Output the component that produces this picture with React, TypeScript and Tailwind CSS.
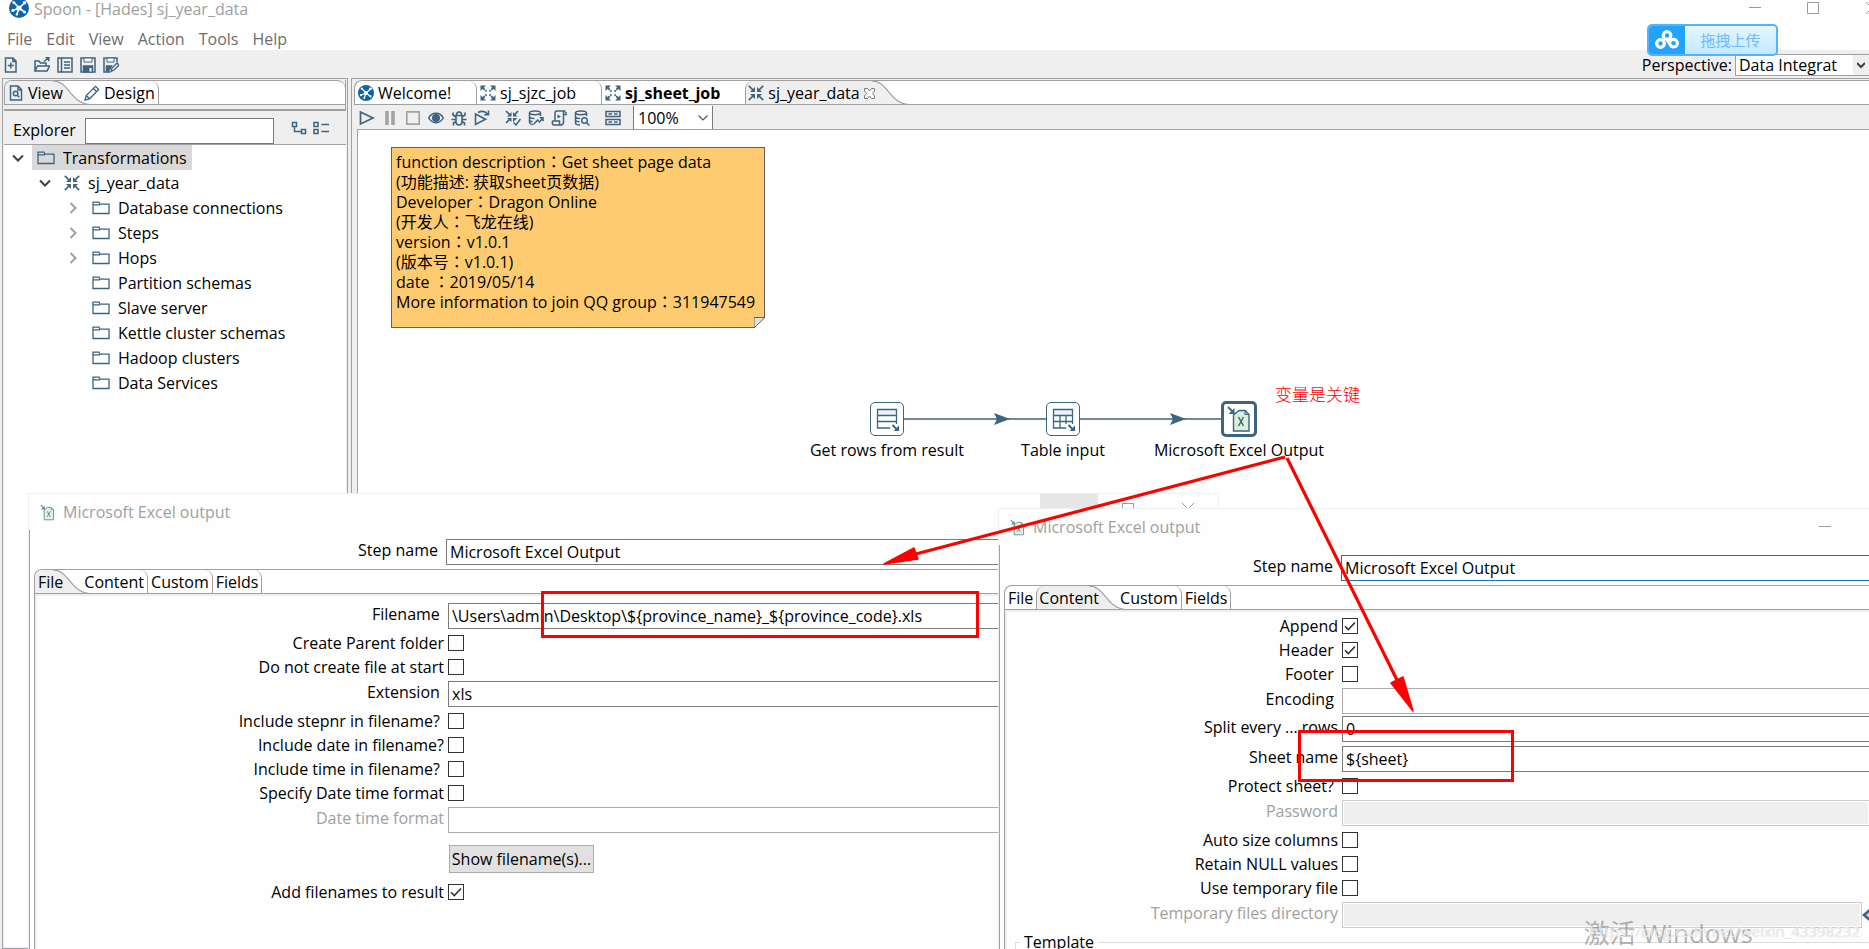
import React, { useId } from "react";

const INK = "#3d6480";

type IconProps = { className?: string };

function Icon({ children, className = "size-4" }: { children: React.ReactNode; className?: string }) {
  return (
    <svg viewBox="0 0 16 16" className={"shrink-0 " + className} fill="none" stroke={INK} strokeWidth="1.5" aria-hidden="true">
      {children}
    </svg>
  );
}

function SpoonLogo({ className = "size-4" }: IconProps) {
  return (
    <svg viewBox="0 0 20 20" className={"shrink-0 " + className} aria-hidden="true">
      <circle cx="10" cy="10" r="10" fill="#0f63ab" />
      <g stroke="#fff" strokeWidth="1.6" strokeLinecap="round">
        <path d="M10 10L5 4.5M10 10l5.5-5M10 10l-6 2.5M10 10l-2 6M10 10l5.5 4" />
      </g>
      <g fill="#fff">
        <circle cx="10" cy="10" r="2.6" />
        <circle cx="4.8" cy="4.6" r="1.4" />
        <circle cx="15.6" cy="4.8" r="1.8" />
        <circle cx="3.8" cy="12.6" r="1.5" />
        <circle cx="7.8" cy="16.4" r="1.2" />
        <circle cx="15.6" cy="14.2" r="1.4" />
      </g>
    </svg>
  );
}

const NewFile = () => (
  <Icon>
    <path d="M2.5 1h7.5l3 3v11H2.5zM10 1v3.5h3M7.8 5.5v6M4.8 8.5h6" />
  </Icon>
);
const OpenFile = () => (
  <Icon>
    <path d="M1 14V4h4l1.5 2H12v3M1 14l2.5-5H15.5l-2.5 5zM10 4.5L14.5 1M11.5 .8h3.3v3.4" />
  </Icon>
);
const Explore = () => (
  <Icon>
    <path d="M1 1h14v14H1zM4.5 1v14M7 5h6M7 8h6M7 11h6" />
  </Icon>
);
const Save = () => (
  <Icon>
    <path d="M1 1h14v14H1z" />
    <path d="M4 1h8v4H4z" fill="#fff" strokeWidth="1" />
    <path d="M3.5 15V9h9v6z" fill={INK} />
    <path d="M9.5 11h2v3.5h-2z" fill="#fff" stroke="none" />
  </Icon>
);
const SaveAs = () => (
  <Icon>
    <path d="M7 15H1V1h13v4" />
    <path d="M4 1h7v4H4z" fill="#fff" strokeWidth="1" />
    <path d="M3.5 14V9h5l-3 5z" fill={INK} />
    <path d="M8 14.5l1-3.5 5-5 2 2-5 5z" fill="#efefef" strokeWidth="1.3" />
  </Icon>
);
const FileSearch = () => (
  <Icon>
    <path d="M2.5 1h7.5l3.5 3.5V15h-11zM10 1v4h3.5" />
    <circle cx="7.6" cy="8.5" r="2.3" />
    <path d="M9.2 10.2l2 2" />
  </Icon>
);
const Pencil = () => (
  <Icon>
    <path d="M1 15l1.2-4.5L11.5 1.3l3.2 3.2L5.5 13.8zM9.5 3.5l3.2 3.2M2.2 10.5l3.3 3.3" strokeWidth="1.3" />
  </Icon>
);
const ExpandTree = () => (
  <Icon>
    <path d="M1.5 2.500h4v4h-4zM10.500 9.500h4v4h-4zM3.500 7v4.500H10" />
  </Icon>
);
const CollapseTree = () => (
  <Icon>
    <path d="M1 2.500h4v4H1zM1 9.500h4v4H1zM8.500 4.500H16M8.500 11.500H16" />
  </Icon>
);
const Folder = () => (
  <Icon className="h-4 w-[18px]">
    <path d="M0 2.200h6l1 2h9v9.300H0zM0 4.800h7" strokeWidth="1.300" />
  </Icon>
);
const Transformation = () => (
  <Icon>
    <path d="M.8 .8L6 6M15.200 .8L10 6M.8 15.200L6 10M15.200 15.200L10 10" strokeWidth="1.700" />
    <path d="M7 2v5H2zM9 2v5h5zM7 14V9H2zM9 14V9h5z" fill={INK} stroke="none" />
  </Icon>
);
const Job = () => (
  <Icon>
    <path d="M2 2l4.500 4.500M14 2L9.500 6.500M2 14l4.500-4.500M14 14L9.500 9.500" strokeWidth="1.800" strokeDasharray="4 .8" />
    <path d="M.5 .5H6L.5 6zM15.500 .5V6L10 .5zM.5 15.500V10L6 15.500zM15.500 15.500H10l5.500-5.500z" fill={INK} stroke="none" />
  </Icon>
);
const Play = () => (
  <Icon>
    <path d="M1.500 2L14 8 1.500 14z" strokeWidth="1.700" />
  </Icon>
);
const Pause = () => (
  <Icon>
    <path d="M5 1v14M11 1v14" stroke="#a3a3a3" strokeWidth="3.600" />
  </Icon>
);
const Stop = () => (
  <Icon>
    <path d="M1.800 1.800h12.400v12.400H1.800z" stroke="#a3a3a3" strokeWidth="1.700" />
  </Icon>
);
const Eye = () => (
  <Icon>
    <path d="M.7 8C4 1.800 12 1.800 15.300 8 12 14.200 4 14.200 .7 8z" />
    <circle cx="8" cy="8" r="4" fill={INK} stroke="none" />
  </Icon>
);
const Bug = () => (
  <Icon>
    <path d="M5 5.500h6v6C11 14 9.500 15 8 15s-3-1-3-3.500zM5.500 5C5.500 1 10.500 1 10.500 5M5 7L2 5V2.500M11 7l3-2V2.500M5 9.500H.5M11 9.500h4.500M5 11.500L2.500 13v2.500M11 11.500l2.500 1.500v2.500" strokeWidth="1.600" />
  </Icon>
);
const Replay = () => (
  <Icon>
    <path d="M1.500 4l10 5.200-10 5.300zM4 2.500C8 .5 11 1 13.500 4M14.500 .5v4.300h-4.300" strokeWidth="1.600" />
  </Icon>
);
const Verify = () => (
  <Icon>
    <path d="M1 1l4.500 4.500M13 1L9 5.500M1 13l4.500-4.500" strokeWidth="1.700" />
    <path d="M6.500 2v4.500H2zM8 2v4.500h4.500zM6.500 12V8H2zM8 12V8h4.500z" fill={INK} stroke="none" />
    <path d="M8.500 12.500l2.500 2.500 4.500-6" />
  </Icon>
);
const Impact = () => (
  <Icon>
    <path d="M12.500 6V3M1.500 3v9.500c0 1 2 2 4 2M1.500 6.500c0 1 2 2 5 2M1.500 10c0 1 1 1.500 3 1.700" />
    <ellipse cx="7" cy="2.800" rx="5.500" ry="1.900" />
    <path d="M6 14l3.500-4 2 2L15 8M11.800 7.800H15v3.400" />
  </Icon>
);
const Sql = () => (
  <Icon>
    <path d="M4 11V3c0-2 1-2 2-2h8.500c-1.500 0-2 .8-2 2v9c0 2-1 3-2.500 3H2.500C1 15 1 11 2 11h6.500v2c0 1 .5 2 1.500 2M12.500 4.500H15V2" />
    <path d="M6.500 4.500l3.500 2-3.500 2z" fill={INK} stroke="none" />
  </Icon>
);
const DbExplore = () => (
  <Icon>
    <path d="M12.500 6V3M1.500 3v10c0 1 2 2 4.500 2M1.500 6.500c0 1 2 2 4.500 2M1.500 10c0 1 1.500 1.700 4 1.800" />
    <ellipse cx="7" cy="2.800" rx="5.500" ry="1.900" />
    <circle cx="10.500" cy="10.500" r="2.800" />
    <path d="M12.500 12.500l3 3" />
  </Icon>
);
const Results = () => (
  <Icon>
    <path d="M1 1.500h14v5H1zM1 9.500h14v5H1zM3.500 4h3.500M9 4h3.500M3.500 12h3.500M9 12h3.500" />
  </Icon>
);
const CloseX = () => (
  <svg viewBox="0 0 11 11" className="size-[11px]" fill="#fff" stroke="#777" aria-hidden="true">
    <path d="M.5 .5h3l2 2.500 2-2.500h3v2.500l-2 2.500 2 2.500v2.500h-3l-2-2.500-2 2.500h-3V8l2-2.500-2-2.500z" />
  </svg>
);
const ExcelFile = ({ className = "size-4" }: IconProps) => (
  <svg viewBox="0 0 28 28" className={"shrink-0 " + className} fill="none" aria-hidden="true">
    <path d="M8.500 10L14 5.500h6l4 4V26H8.500z" fill="#d9f0d5" stroke={INK} strokeWidth="1.400" />
    <path d="M20 5.500v4h4" stroke={INK} strokeWidth="1.200" />
    <path d="M13.500 12l5 9M18.500 12l-5 9" stroke={INK} strokeWidth="1.500" />
    <path d="M3 2l6 6" stroke={INK} strokeWidth="1.800" />
    <path d="M9.500 3v6h-6z" fill={INK} />
  </svg>
);

function Chevron({ open }: { open?: boolean }) {
  return (
    <svg viewBox="0 0 12 12" className="size-3 shrink-0" fill="none" strokeWidth="2" aria-hidden="true">
      {open ? <path d="M1 3.500l5 5 5-5" stroke="#404040" /> : <path d="M3.500 1l5 5-5 5" stroke="#a0a0a0" />}
    </svg>
  );
}

type Tab = { label: string; icon?: React.ReactNode; active?: boolean; bold?: boolean; closable?: boolean; wide?: boolean };

function TabStrip({ tabs, label, closed }: { tabs: Tab[]; label: string; closed?: boolean }) {
  return (
    <div
      role="tablist"
      aria-label={label}
      className={"flex h-[25px] shrink-0 overflow-hidden rounded-tl-lg border border-r-0 border-[#a0a0a0] bg-white " + (closed ? "rounded-tr-lg" : "")}
    >
      {tabs.map((t, i) =>
        t.active ? (
          <button key={t.label} role="tab" aria-selected="true" className={"relative -mb-px flex items-center pl-[3px] " + (t.closable ? "pr-[25px]" : "pr-[18px]")}>
            <span className={"absolute inset-y-0 right-[28px] left-0 bg-[#efefef] " + (i ? "rounded-tl-lg border-l border-[#a0a0a0]" : "")} />
            <svg viewBox="0 0 38 24" className="absolute top-0 right-[-10px] h-6 w-[38px]" fill="none" aria-hidden="true">
              <path d="M0 0C16 0 18 23.500 38 23.500V24H0z" fill="#efefef" />
              <path d="M0 0C16 0 18 23.500 38 23.500" stroke="#a0a0a0" strokeWidth="1.200" />
            </svg>
            <span className="relative flex items-center gap-1">
              {t.icon}
              {t.label}
              {t.closable && <CloseX />}
            </span>
          </button>
        ) : (
          <button
            key={t.label}
            role="tab"
            aria-selected="false"
            className={
              "flex items-center gap-1 pl-[3px] " +
              (t.wide ? "pr-[25px] " : "pr-[3px] ") +
              (tabs[i + 1]?.active ? "" : "rounded-tr-lg border-r border-[#a0a0a0] ") +
              (t.bold ? "font-bold" : "")
            }
          >
            {t.icon}
            {t.label}
          </button>
        ),
      )}
    </div>
  );
}

function TreeRow({ label, icon, depth, state, selected }: { label: string; icon?: React.ReactNode; depth: number; state?: "open" | "closed"; selected?: boolean }) {
  const pad = ["pl-2", "pl-[35px]", "pl-[63px]"][depth];
  return (
    <li className={"flex h-[25px] items-center gap-2 " + pad}>
      <span className="w-3 shrink-0">{state && <Chevron open={state === "open"} />}</span>
      <span className={"flex h-[25px] items-center gap-2 px-[5px] " + (selected ? "bg-[#d9d9d9]" : "")}>
        {icon ?? <Folder />}
        {label}
      </span>
    </li>
  );
}

function CheckRow({ label, checked }: { label: string; checked?: boolean }) {
  const id = useId();
  return (
    <div className="flex h-6 items-center gap-1">
      <label htmlFor={id} className="w-(--label) shrink-0 text-right whitespace-pre">
        {label}
      </label>
      <span className="relative size-4">
        <input id={id} type="checkbox" defaultChecked={checked} className="peer block size-4 appearance-none border border-[#333] bg-white" />
        <svg viewBox="0 0 16 16" className="pointer-events-none absolute inset-0 hidden size-4 peer-checked:block" fill="none" stroke="#333" strokeWidth="1.600" aria-hidden="true">
          <path d="M3 8.200l3.300 3.300L13 4.500" />
        </svg>
      </span>
    </div>
  );
}

function FieldRow({ label, value = "", tone = "normal", muted, inset, children }: { label: string; value?: string; tone?: "normal" | "light" | "disabled" | "focus"; muted?: boolean; inset?: boolean; children?: React.ReactNode }) {
  const id = useId();
  const look = {
    normal: "border-[#7a7a7a] bg-white",
    light: "border-[#ababab] bg-white",
    focus: "border-[#1f74b5] bg-white",
    disabled: "border-[#cccccc] bg-[#efefef] shadow-[inset_0_0_0_1px_#fff]",
  }[tone];
  return (
    <div className={"flex h-[30px] items-center " + (inset ? "gap-2" : "gap-1")}>
      <label htmlFor={id} className={"w-(--label) shrink-0 pb-1 text-right whitespace-pre " + (muted ? "text-[#a0a0a0]" : "")}>
        {label}
      </label>
      <input
        id={id}
        defaultValue={value}
        disabled={tone === "disabled"}
        className={"h-[26px] min-w-0 flex-1 border-y border-l px-[3px] outline-none " + look + (children ? " border-r" : "")}
      />
      {children}
    </div>
  );
}

function Toolbar() {
  return (
    <div className="flex h-7 shrink-0 items-center justify-between bg-[#efefef] pt-0.5">
      <div className="flex items-center gap-[7px] pl-[3px]">
        {[["New", <NewFile />], ["Open", <OpenFile />], ["Explore repository", <Explore />], ["Save", <Save />], ["Save as", <SaveAs />]].map(([name, icon], i) => (
          <button key={name as string} aria-label={name as string} className={i === 0 ? "mr-2" : ""}>
            {icon}
          </button>
        ))}
      </div>
      <div className="flex items-center gap-[3px]">
        <label htmlFor="perspective">Perspective:</label>
        <span className="relative flex w-[134px]">
          <select id="perspective" className="h-[22px] w-full appearance-none overflow-hidden border border-r-0 border-[#a0a0a0] bg-white pr-5 pl-[3px] leading-5">
            <option>Data Integrat</option>
          </select>
          <span className="pointer-events-none absolute top-px right-0 bottom-px flex w-4 items-center justify-center bg-[#efefef]">
            <svg viewBox="0 0 8 8" className="size-2" fill="none" stroke="#404040" strokeWidth="2" aria-hidden="true">
              <path d="M0 2l4 4 4-4" />
            </svg>
          </span>
        </span>
      </div>
    </div>
  );
}

function Explorer() {
  return (
    <aside className="flex w-[346px] shrink-0 flex-col border border-[#a0a0a5] bg-[#efefef] p-px">
      <div className="border-r border-b-2 border-[#a0a0a0] pb-1">
        <TabStrip closed label="Explorer views" tabs={[{ label: "View", icon: <FileSearch />, active: true }, { label: "Design", icon: <Pencil /> }]} />
      </div>
      <div className="flex h-[34px] items-end border-b border-[#a0a0a0]">
        <label htmlFor="explorer-filter" className="w-[81px] pb-[2px] pl-[9px]">
          Explorer
        </label>
        <input id="explorer-filter" className="h-[26px] w-[189px] border border-[#7a7a7a] bg-white px-1" />
        <span className="flex gap-[6px] pb-2 pl-[17px]">
          <button aria-label="Expand all">
            <ExpandTree />
          </button>
          <button aria-label="Collapse all">
            <CollapseTree />
          </button>
        </span>
      </div>
      <ul className="flex-1 bg-white">
        <TreeRow label="Transformations" depth={0} state="open" selected />
        <TreeRow label="sj_year_data" icon={<Transformation />} depth={1} state="open" />
        <TreeRow label="Database connections" depth={2} state="closed" />
        <TreeRow label="Steps" depth={2} state="closed" />
        <TreeRow label="Hops" depth={2} state="closed" />
        <TreeRow label="Partition schemas" depth={2} />
        <TreeRow label="Slave server" depth={2} />
        <TreeRow label="Kettle cluster schemas" depth={2} />
        <TreeRow label="Hadoop clusters" depth={2} />
        <TreeRow label="Data Services" depth={2} />
      </ul>
    </aside>
  );
}

const NOTE = [
  "function description：Get sheet page data",
  "(功能描述: 获取sheet页数据)",
  "Developer：Dragon Online",
  "(开发人：飞龙在线)",
  "version：v1.0.1",
  "(版本号：v1.0.1)",
  "date ：2019/05/14",
  "More information to join QQ group：311947549",
];

function NoteLine({ text }: { text: string }) {
  const [key, value] = text.split("：");
  return (
    <p className="whitespace-pre">
      {key}
      {value && <span className="font-['Noto_Sans_CJK_TC',sans-serif] leading-none">：</span>}
      {value}
    </p>
  );
}

function Step({ label, place, children, selected }: { label: string; place: string; children: React.ReactNode; selected?: boolean }) {
  return (
    <div className={"absolute flex w-[180px] flex-col items-center " + place}>
      <div className={"flex items-center justify-center rounded-[5px] bg-white " + (selected ? "size-9 border-3 border-[#3d6480]" : "my-px size-[34px] border border-[#3d6480]")}>{children}</div>
      <span className="mt-px leading-6 whitespace-nowrap">{label}</span>
    </div>
  );
}

function TableGlyph({ columns }: { columns?: boolean }) {
  return (
    <svg viewBox="0 0 28 28" className="size-7" fill="none" stroke={INK} strokeWidth="1.300" aria-hidden="true">
      <path d="M4 5h19v5.500H4z" fill="#eaf4fb" stroke="none" />
      <path d="M23.500 19V4.500h-19V23H17M4.500 10.500h19M4.500 16.500h19" />
      {columns && <path d="M11 10.500V23M17 10.500V19" />}
      <path d="M19.500 20l5 5" strokeWidth="1.800" />
      <path d="M26 20.500V26h-5.500z" fill={INK} stroke="none" />
    </svg>
  );
}

function Canvas() {
  return (
    <div className="relative ml-[3px] flex-1 border-t border-l border-[#a0a0a5] bg-white">
      <div className="absolute top-[17px] left-[33px] h-[181px] w-[374px] border border-[#5f5f5f] bg-[#ffcb70] py-1 pl-1 leading-5">
        {NOTE.map((line) => (
          <NoteLine key={line} text={line} />
        ))}
        <svg viewBox="0 0 11 11" className="absolute -right-px -bottom-px size-[11px]" aria-hidden="true">
          <path d="M0 0h11v11H0z" fill="#fff" />
          <path d="M0 11V.5h11z" fill="#e0e0e0" stroke="#5f5f5f" />
        </svg>
      </div>
      <svg viewBox="0 0 400 20" className="absolute top-[279px] left-[540px] h-5 w-[400px]" aria-hidden="true">
        <path d="M6 10h142M182 10h142" stroke={INK} strokeWidth="1.300" />
        <path d="M96 4l16 6-16 6 3-6zM272 4l16 6-16 6 3-6z" fill={INK} />
      </svg>
      <Step label="Get rows from result" place="top-[271px] left-[439px]">
        <TableGlyph />
      </Step>
      <Step label="Table input" place="top-[271px] left-[615px]">
        <TableGlyph columns />
      </Step>
      <Step label="Microsoft Excel Output" place="top-[271px] left-[791px]" selected>
        <ExcelFile className="size-7" />
      </Step>
    </div>
  );
}

function Editor() {
  return (
    <main className="flex min-w-0 flex-1 flex-col border-t border-l border-[#a0a0a5] bg-[#efefef] pt-px pl-[2px]">
      <TabStrip
        label="Open files"
        tabs={[
          { label: "Welcome!", icon: <SpoonLogo />, wide: true },
          { label: "sj_sjzc_job", icon: <Job />, wide: true },
          { label: "sj_sheet_job", icon: <Job />, bold: true, wide: true },
          { label: "sj_year_data", icon: <Transformation />, active: true, closable: true },
        ]}
      />
      <div className="flex h-6 shrink-0 items-end gap-[7px] pl-[5px]">
        {[["Run", <Play />], ["Pause", <Pause />], ["Stop", <Stop />], ["Preview", <Eye />], ["Debug", <Bug />], ["Replay", <Replay />]].map(([name, icon]) => (
          <button key={name as string} aria-label={name as string} className="pb-[3px]">
            {icon}
          </button>
        ))}
        <span className="flex gap-[7px] pb-[3px] pl-2">
          {[["Verify", <Verify />], ["Impact", <Impact />], ["SQL", <Sql />], ["Explore database", <DbExplore />]].map(([name, icon]) => (
            <button key={name as string} aria-label={name as string}>
              {icon}
            </button>
          ))}
        </span>
        <button aria-label="Show results" className="ml-2 pb-[3px]">
          <Results />
        </button>
        <span className="relative ml-[5px]">
          <select aria-label="Zoom" className="block h-[23px] w-20 appearance-none border-x border-[#7a7a7a] bg-white pl-1 leading-5">
            <option>100%</option>
          </select>
          <svg viewBox="0 0 10 10" className="pointer-events-none absolute top-[7px] right-[5px] size-2.5" fill="none" stroke="#555" strokeWidth="1.200" aria-hidden="true">
            <path d="M.5 2.500L5 7l4.500-4.500" />
          </svg>
        </span>
      </div>
      <Canvas />
    </main>
  );
}

function DialogTitle() {
  return (
    <header className="flex h-9 shrink-0 items-center gap-[7px] pl-2.5 text-[#a0a0a0]">
      <ExcelFile className="size-[17px] opacity-80" />
      Microsoft Excel output
    </header>
  );
}

function FileDialog() {
  return (
    <section aria-label="File settings" className="absolute top-[493px] bottom-0 left-[28px] flex w-[1191px] flex-col overflow-hidden border border-b-0 border-[#f0f0f0] bg-[#fefefe]">
      <DialogTitle />
      <div className="absolute top-0 right-0 flex h-[30px] items-center">
        <span className="h-full w-[58px] bg-[#e6e6e6]" />
        <span className="ml-6 size-3 border border-[#999]" />
        <svg viewBox="0 0 12 12" className="mr-6 ml-12 size-3" stroke="#999" aria-hidden="true">
          <path d="M0 0l12 12M12 0L0 12" />
        </svg>
      </div>
      <div className="flex flex-1 flex-col border-l border-[#a0a0a5] pt-[7px] pl-1">
        <div className="[--label:404px]">
          <FieldRow label="Step name" value="Microsoft Excel Output" inset />
        </div>
        <div className="mt-[2px] flex flex-1 flex-col">
          <TabStrip label="File dialog tabs" tabs={[{ label: "File", active: true }, { label: "Content" }, { label: "Custom" }, { label: "Fields" }]} />
          <div className="flex-1 border-l border-[#a0a0a0] pt-[7px] shadow-[inset_2px_2px_0_#efefef] [--label:409px]">
            <FieldRow label="Filename " value="\Users\admin\Desktop\${province_name}_${province_code}.xls" />
            <CheckRow label="Create Parent folder" />
            <CheckRow label="Do not create file at start" />
            <FieldRow label="Extension " value="xls" />
            <CheckRow label="Include stepnr in filename? " />
            <CheckRow label="Include date in filename?" />
            <CheckRow label="Include time in filename? " />
            <CheckRow label="Specify Date time format" />
            <FieldRow label="Date time format" tone="light" muted />
            <div className="flex h-[45px] items-start pt-2.5 pl-[414px]">
              <button className="h-7 w-[145px] border border-[#ababab] bg-[#e1e1e1]">Show filename(s)...</button>
            </div>
            <CheckRow label="Add filenames to result" checked />
          </div>
        </div>
      </div>
    </section>
  );
}

function ContentDialog() {
  return (
    <section aria-label="Content settings" className="absolute top-[508px] right-0 bottom-0 left-[998px] flex flex-col overflow-hidden border-t border-l border-[#f0f0f0] bg-[#fefefe]">
      <DialogTitle />
      <span className="absolute top-[17px] right-[38px] h-px w-3 bg-[#999]" />
      <div className="flex flex-1 flex-col border-l border-[#a0a0a5] pt-2 pl-1">
        <div className="[--label:329px]">
          <FieldRow label="Step name" value="Microsoft Excel Output" tone="focus" inset />
        </div>
        <div className="mt-[2px] flex flex-1 flex-col">
          <TabStrip label="Content dialog tabs" tabs={[{ label: "File" }, { label: "Content", active: true }, { label: "Custom" }, { label: "Fields" }]} />
          <div className="flex-1 border-l border-[#a0a0a0] pt-1 shadow-[inset_2px_2px_0_#efefef] [--label:333px]">
            <CheckRow label="Append" checked />
            <CheckRow label="Header " checked />
            <CheckRow label="Footer " />
            <div className="-mb-[2px]">
              <FieldRow label="Encoding " tone="light" />
            </div>
            <FieldRow label="Split every ... rows" value="0" />
            <FieldRow label="Sheet name" value="${sheet}" />
            <CheckRow label="Protect sheet? " />
            <FieldRow label="Password" tone="disabled" muted />
            <CheckRow label="Auto size columns" />
            <CheckRow label="Retain NULL values" />
            <CheckRow label="Use temporary file" />
            <FieldRow label="Temporary files directory" tone="disabled" muted>
              <svg viewBox="0 0 7 14" className="-ml-1 h-3.5 w-[7px]" aria-hidden="true">
                <path d="M0 7l7-6v12z" fill={INK} />
                <path d="M4 7l3-2.500v5z" fill="#cfdde6" />
              </svg>
            </FieldRow>
            <fieldset className="ml-2.5 h-10 border border-r-0 border-[#dcdcdc] pl-1">
              <legend className="px-1">Template</legend>
            </fieldset>
          </div>
        </div>
      </div>
    </section>
  );
}

function UploadBadge() {
  return (
    <button className="absolute top-6 right-[91px] flex h-8 w-[131px] overflow-hidden rounded-[5px] border-2 border-[#55b2fb] bg-linear-to-b from-[#e6f6ff] to-[#c3eaff] text-[15px] text-[#6dbdf9]">
      <span className="flex h-full w-9 items-center justify-center bg-[#22a3ff]">
        <svg viewBox="0 0 24 20" className="h-5 w-6" fill="none" stroke="#fff" strokeWidth="3.200" strokeLinecap="round" aria-hidden="true">
          <circle cx="12" cy="5.500" r="3.800" />
          <circle cx="5.500" cy="13.500" r="3.800" />
          <path d="M12.500 10.500l3.500 5.500a3.800 3.800 0 1 0-.5-5" />
        </svg>
      </span>
      <span className="flex h-full flex-1 items-center justify-center">拖拽上传</span>
    </button>
  );
}

function Annotations() {
  return (
    <div className="pointer-events-none absolute inset-0">
      <span className="absolute top-[383px] left-[1275px] text-[17px] leading-6 font-light text-[#ff0000]">变量是关键</span>
      <svg className="absolute inset-0 size-full" fill="#ff0000" stroke="#ff0000" aria-hidden="true">
        <path d="M1285 457L912 555M1287 458L1398 682" strokeWidth="3.200" />
        <path d="M884 564l30-16 4 11zM1413 711l-22-28 12-6z" strokeLinejoin="round" strokeWidth="1.500" />
      </svg>
      <span className="absolute top-[591px] left-[541px] h-[47px] w-[438px] border-3 border-[#ff0000]" />
      <span className="absolute top-[730px] left-[1298px] h-[52px] w-[216px] border-3 border-[#ff0000]" />
      <span className="absolute right-[116px] bottom-0 text-[26px] leading-8 text-[#7f7f7f]/60">激活 Windows</span>
      <span className="absolute right-[9px] bottom-[6px] text-[15px] leading-6 text-white/70 [text-shadow:0_0_1px_#bbb]">https://blog.csdn.net/weixin_43398232</span>
    </div>
  );
}

export default function App() {
  return (
    <div className="relative flex h-screen flex-col overflow-hidden bg-white font-['Open_Sans','Noto_Sans_CJK_SC',sans-serif] text-[16px] leading-6 text-black">
      <header className="flex h-[22px] shrink-0 items-start justify-between">
        <h1 className="flex h-[18px] items-end gap-[5px] pl-[9px] leading-[18px] text-[#a0a0a0]">
          <SpoonLogo className="size-5" />
          Spoon - [Hades] sj_year_data
        </h1>
        <svg viewBox="0 0 120 22" className="h-[22px] w-[120px]" fill="none" stroke="#999" aria-hidden="true">
          <path d="M0 7.500h12M58.500 2.500h11v11h-11zM117 2l12 12M117 14l12-12" />
        </svg>
      </header>
      <nav className="flex h-7 shrink-0 items-center pb-0.5 pl-[7px] text-[#6d6d6d]">
        {["File", "Edit", "View", "Action", "Tools", "Help"].map((m) => (
          <button key={m} className="mr-[14px] pt-2">
            {m}
          </button>
        ))}
      </nav>
      <Toolbar />
      <div className="flex min-h-0 flex-1 gap-[3px] bg-[#efefef] pl-[2px]">
        <Explorer />
        <Editor />
      </div>
      <UploadBadge />
      <FileDialog />
      <ContentDialog />
      <Annotations />
    </div>
  );
}
